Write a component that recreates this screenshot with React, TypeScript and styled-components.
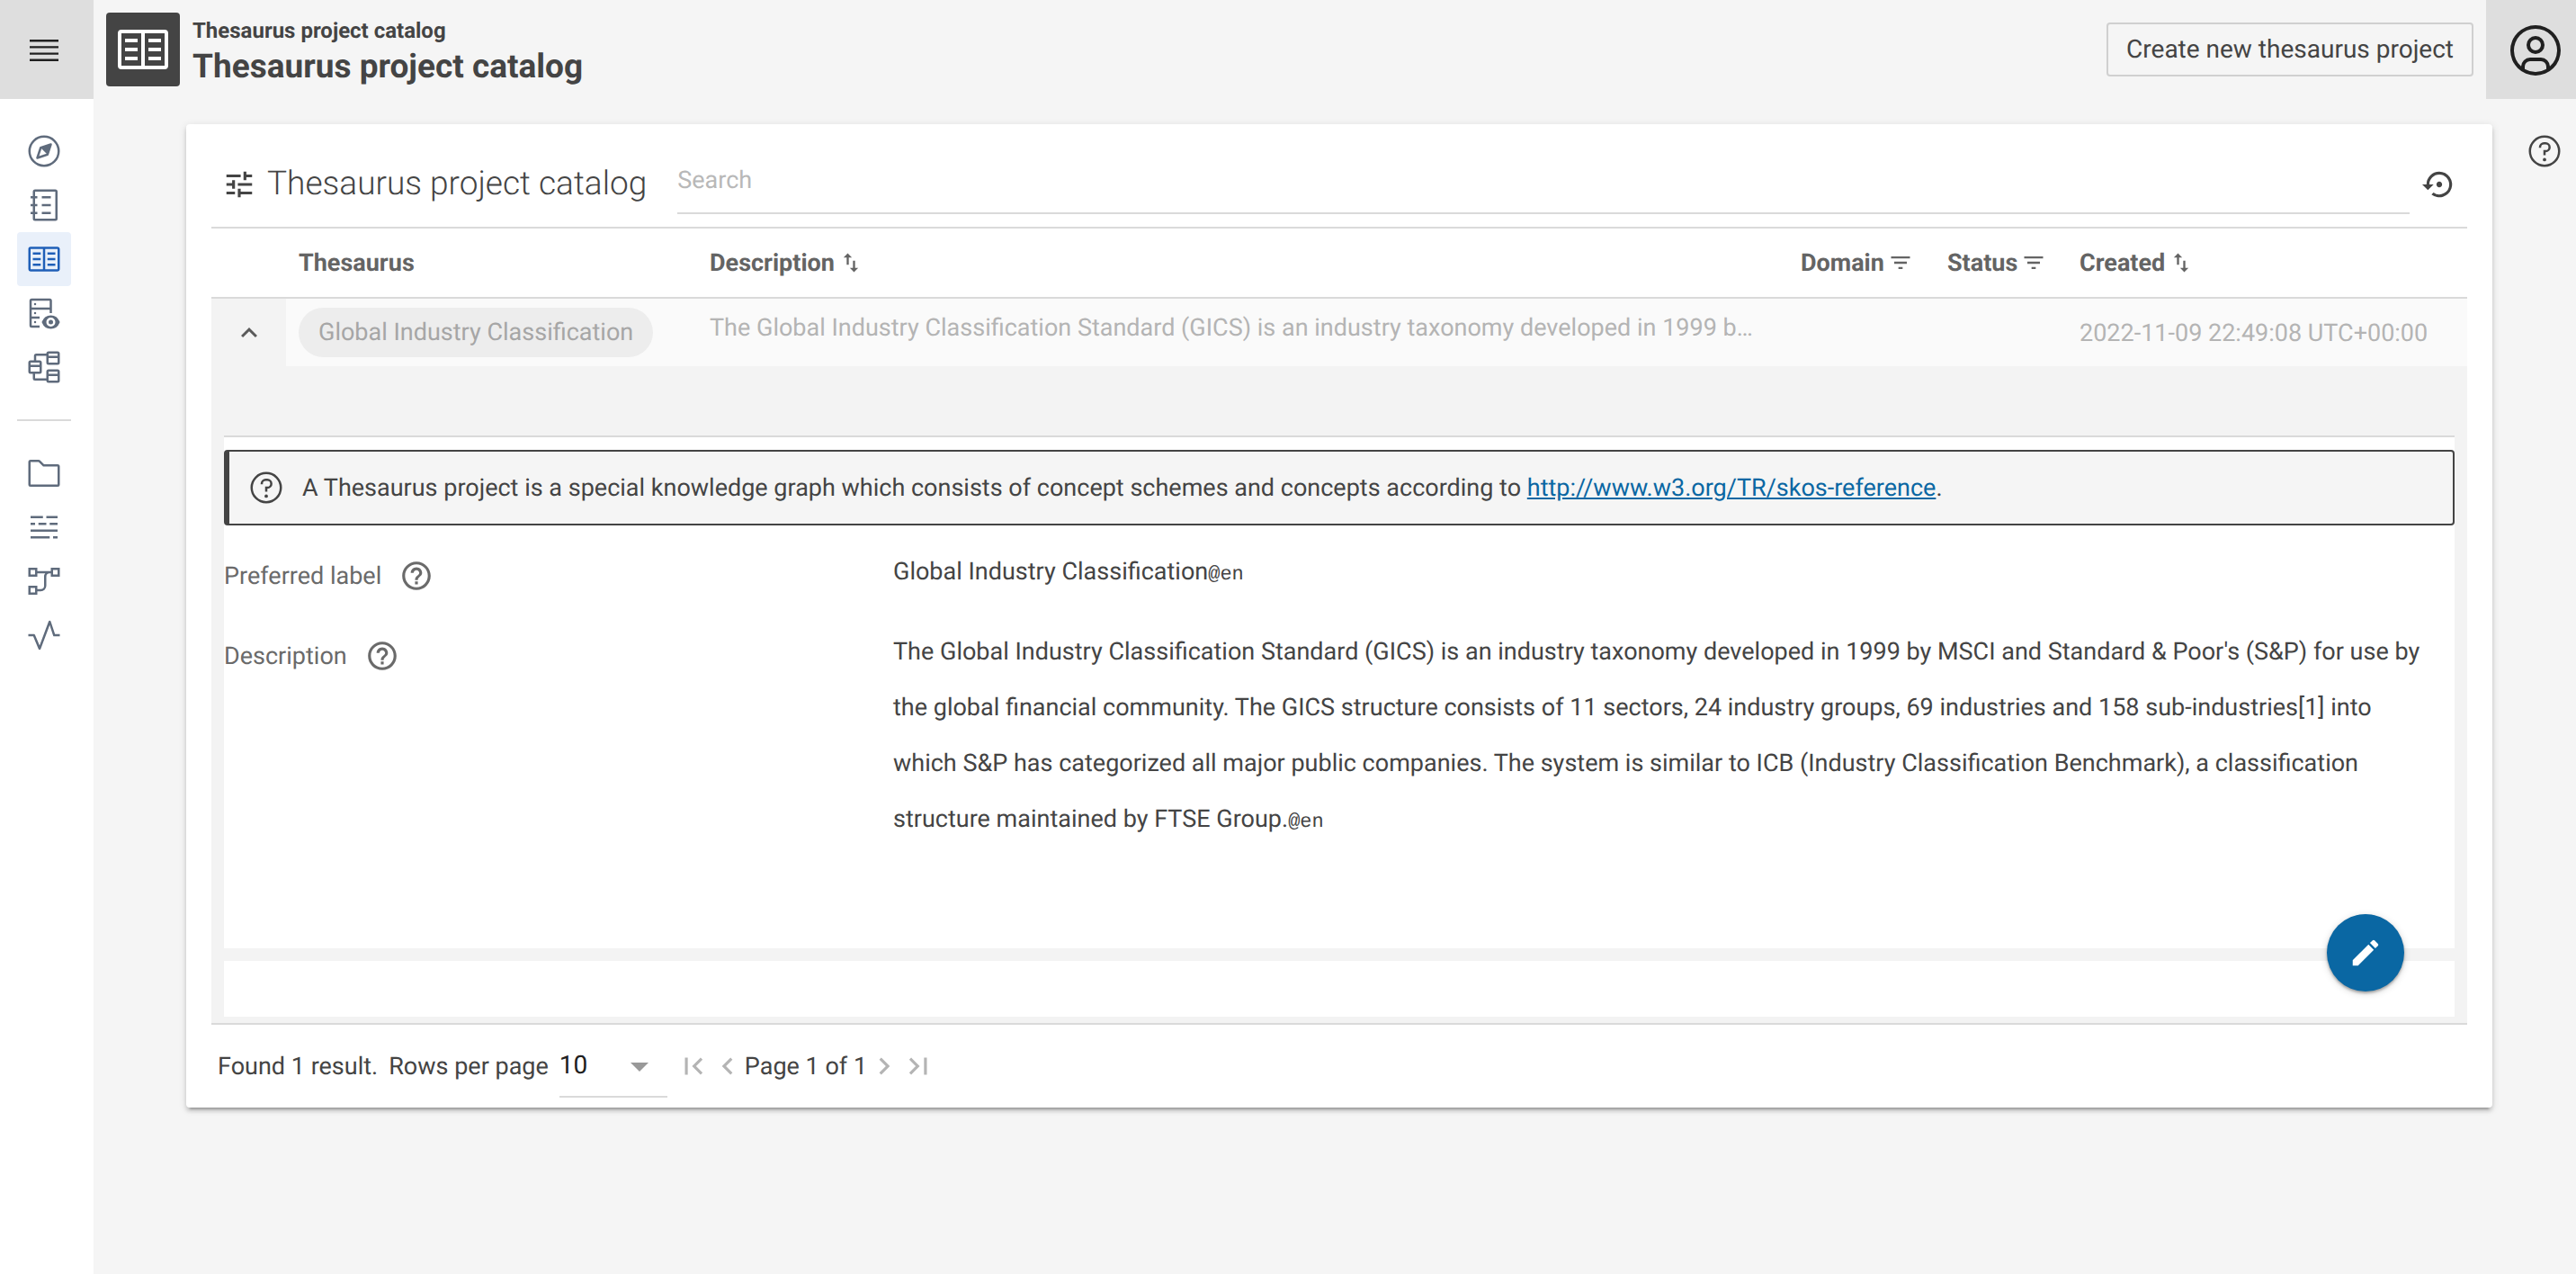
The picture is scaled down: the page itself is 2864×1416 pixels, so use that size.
import React, { useState } from "react";
import styled, { createGlobalStyle } from "styled-components";
import {
  MdExpandLess,
  MdFilterList,
  MdFirstPage,
  MdHelpOutline,
  MdImportExport,
  MdLastPage,
  MdModeEdit,
  MdNavigateBefore,
  MdNavigateNext,
  MdSettingsBackupRestore,
  MdTune,
} from "react-icons/md";

const GlobalStyle = createGlobalStyle`
  *, *::before, *::after { box-sizing: border-box; }
  body {
    margin: 0;
    background: #f5f5f5;
    color: #444;
    font-family: Roboto, "Liberation Sans", sans-serif;
    font-size: 27px;
    line-height: 36px;
    text-rendering: geometricPrecision;
  }
  button, input, select { font: inherit; color: inherit; text-rendering: inherit; }
`;

/* ---------- icons, on a 32 unit grid unless told otherwise ---------- */

const GridIcon = styled.svg.attrs<{ $grid?: number; $size?: number }>((p) => ({
  viewBox: `0 0 ${p.$grid ?? 32} ${p.$grid ?? 32}`,
  "aria-hidden": true,
}))<{ $grid?: number; $size?: number }>`
  display: block;
  flex: none;
  width: ${(p) => p.$size ?? 40}px;
  height: ${(p) => p.$size ?? 40}px;
  fill: currentColor;
`;

const Lines = styled.g`
  fill: none;
  stroke: currentColor;
  stroke-width: 2;
`;

const CompassIcon = () => (
  <GridIcon>
    <path d="M22.707,9.293a.9994.9994,0,0,0-1.0234-.2417l-9,3a1.001,1.001,0,0,0-.6323.6323l-3,9a1,1,0,0,0,1.2651,1.2651l9-3a1.0013,1.0013,0,0,0,.6323-.6324l3-9A1,1,0,0,0,22.707,9.293ZM11.5811,20.419l2.2094-6.6284L18.21,18.21Z" />
    <path d="M16,30A14,14,0,1,1,30,16,14.0158,14.0158,0,0,1,16,30ZM16,4A12,12,0,1,0,28,16,12.0137,12.0137,0,0,0,16,4Z" />
  </GridIcon>
);

const CatalogIcon = () => (
  <GridIcon>
    <path d="M26,2H8A2,2,0,0,0,6,4V8H4v2H6v5H4v2H6v5H4v2H6v4a2,2,0,0,0,2,2H26a2,2,0,0,0,2-2V4A2,2,0,0,0,26,2Zm0,26H8V24h2V22H8V17h2V15H8V10h2V8H8V4H26Z" />
    <path d="M14 8h8v2h-8zM14 15h8v2h-8zM14 22h8v2h-8z" />
  </GridIcon>
);

const BookIcon = ({ size }: { size?: number }) => (
  <GridIcon $size={size}>
    <path d="M28,5H4A2.002,2.002,0,0,0,2,7V25a2.002,2.002,0,0,0,2,2H28a2.002,2.002,0,0,0,2-2V7A2.002,2.002,0,0,0,28,5ZM4,7H15V25H4ZM17,25V7H28V25Z" />
    <path d="M19 10h7v2h-7zM19 15h7v2h-7zM19 20h7v2h-7zM6 10h7v2H6zM6 15h7v2H6zM6 20h7v2H6z" />
  </GridIcon>
);

const DataViewIcon = () => (
  <GridIcon>
    <Lines>
      <path d="M12 28H5a1 1 0 0 1-1-1V5a1 1 0 0 1 1-1h16a1 1 0 0 1 1 1v11M4 12h18M4 20h8" />
    </Lines>
    <circle cx="8" cy="8" r="1" />
    <circle cx="8" cy="16" r="1" />
    <circle cx="8" cy="24" r="1" />
    <circle cx="22" cy="24" r="2" />
    <path d="M29.7769,23.4785A8.64,8.64,0,0,0,22,18a8.64,8.64,0,0,0-7.7769,5.4785L14,24l.2231.5215A8.64,8.64,0,0,0,22,30a8.64,8.64,0,0,0,7.7769-5.4785L30,24ZM22,28a4,4,0,1,1,4-4A4.0045,4.0045,0,0,1,22,28Z" />
  </GridIcon>
);

const StructureIcon = () => (
  <GridIcon>
    <Lines>
      <rect x="19" y="3" width="10" height="10" rx="1" />
      <rect x="19" y="19" width="10" height="10" rx="1" />
      <rect x="3" y="11" width="10" height="10" rx="1" />
      <path d="M19 7h10M19 23h10M3 15h10M8 11V6a1 1 0 0 1 1-1h10M7 21v5a1 1 0 0 0 1 1h11" />
    </Lines>
  </GridIcon>
);

const FolderIcon = () => (
  <GridIcon>
    <path d="M11.17,6l3.42,3.41.58.59H28V26H4V6h7.17m0-2H4A2,2,0,0,0,2,6V26a2,2,0,0,0,2,2H28a2,2,0,0,0,2-2V10a2,2,0,0,0-2-2H16L12.59,4.59A2,2,0,0,0,11.17,4Z" />
  </GridIcon>
);

const TextLinesIcon = () => (
  <GridIcon>
    <path d="M4 6h11v2H4zM18 6h10v2H18zM4 12h4v2H4zM11 12h7v2h-7zM21 12h7v2h-7zM4 18h24v2H4zM4 24h17v2H4zM24 24h4v2h-4z" />
  </GridIcon>
);

const FlowIcon = () => (
  <GridIcon>
    <Lines>
      <path d="M3 5h6v6H3zM23 5h6v6h-6zM3 21h6v6H3zM10 8h12M10 24h3a4 4 0 0 0 4-4v-8a4 4 0 0 1 4-4" />
    </Lines>
  </GridIcon>
);

const ActivityIcon = () => (
  <GridIcon>
    <path d="M12,29a1,1,0,0,1-.92-.62L6.33,17H2V15H7a1,1,0,0,1,.92.62L12,25.28,20.06,3.65A1,1,0,0,1,21,3a1,1,0,0,1,.93.68L25.72,15H30v2H25a1,1,0,0,1-.95-.68L21,7,12.94,28.35A1,1,0,0,1,12,29Z" />
  </GridIcon>
);

const HelpIcon = () => (
  <GridIcon>
    <path d="M16,2A14,14,0,1,0,30,16,14,14,0,0,0,16,2Zm0,26A12,12,0,1,1,28,16,12,12,0,0,1,16,28Z" />
    <circle cx="16" cy="23.5" r="1.5" />
    <path d="M17,8H15.5A4.49,4.49,0,0,0,11,12.49V13h2v-.5A2.5,2.5,0,0,1,15.5,10H17a2.5,2.5,0,0,1,0,5H15v4.5h2V17a4.5,4.5,0,0,0,0-9Z" />
  </GridIcon>
);

const MenuIcon = () => (
  <GridIcon $grid={20}>
    <path d="M2 14.8h16V16H2zM2 11.2h16v1.2H2zM2 7.6h16v1.2H2zM2 4h16v1.2H2z" />
  </GridIcon>
);

const AvatarIcon = () => (
  <GridIcon $size={64}>
    <path d="M16 8a5 5 0 105 5A5 5 0 0016 8zm0 8a3 3 0 113-3A3.0034 3.0034 0 0116 16z" />
    <path d="M16 2A14 14 0 1030 16 14.0158 14.0158 0 0016 2ZM10 26.3765V25a3.0033 3.0033 0 013-3h6a3.0033 3.0033 0 013 3v1.3765a11.8989 11.8989 0 01-12 0zm13.9925-1.4507A5.0016 5.0016 0 0019 20H13a5.0016 5.0016 0 00-4.9925 4.9258 12 12 0 1115.985 0z" />
  </GridIcon>
);

/* ---------- shell ---------- */

const Shell = styled.div`
  display: flex;
  flex-direction: column;
  min-height: 100vh;
`;

const Header = styled.header`
  display: flex;
  align-items: center;
  height: 110px;
`;

const HeaderButton = styled.button<{ $width: number }>`
  display: flex;
  align-items: center;
  justify-content: center;
  align-self: stretch;
  width: ${(p) => p.$width}px;
  padding: 0;
  border: 0;
  background: #dedede;
  color: #202020;
`;

const MenuButton = styled(HeaderButton)`
  padding-right: 6px;
  padding-top: 2px;
`;

const UserButton = styled(HeaderButton)`
  padding-left: 10px;
  padding-top: 2px;
`;

const Badge = styled.div`
  display: flex;
  align-items: center;
  justify-content: center;
  width: 82px;
  height: 82px;
  margin: 0 14px;
  border-radius: 4px;
  background: #444;
  color: #fff;
`;

const Titles = styled.div`
  flex: 1;
  padding-top: 4px;
  font-weight: 700;
`;

const Crumb = styled.p`
  margin: 0;
  font-size: 24px;
  line-height: 36px;
`;

const PageTitle = styled.h1`
  margin: 0;
  font-size: 37px;
  line-height: 46px;
  font-weight: 700;
`;

const OutlineButton = styled.button`
  height: 60px;
  margin-right: 14px;
  padding: 0 20px;
  border: 2px solid #d0d0d0;
  border-radius: 4px;
  background: #f5f5f5;
  font-size: 28px;
`;

const Body = styled.div`
  display: flex;
  flex: 1;
`;

const Rail = styled.nav`
  width: 104px;
  padding: 28px 25px 28px 19px;
  background: #fff;
`;

const RailLink = styled.a<{ $active?: boolean }>`
  display: flex;
  align-items: center;
  justify-content: center;
  height: 60px;
  border-radius: 4px;
  background: ${(p) => (p.$active ? "#e9f0fa" : "transparent")};
  color: ${(p) => (p.$active ? "#1f5fb8" : "#5f6b7c")};
`;

const RailDivider = styled.hr`
  height: 2px;
  margin: 28px 0;
  border: 0;
  background: #dadada;
`;

const Main = styled.main`
  flex: 1;
  min-width: 0;
  padding: 28px 23px 28px 103px;
`;

const Aside = styled.aside`
  width: 70px;
  padding-top: 38px;
`;

const PlainButton = styled.button`
  display: flex;
  flex: none;
  align-items: center;
  justify-content: center;
  padding: 0;
  border: 0;
  background: none;
`;

const AsideButton = styled(PlainButton)`
  width: 100%;
`;

/* ---------- catalog card ---------- */

const Card = styled.section`
  padding: 0 28px;
  border-radius: 4px;
  background: #fff;
  box-shadow: 0 4px 4px rgba(0, 0, 0, 0.14), 0 6px 2px -4px rgba(0, 0, 0, 0.2),
    0 2px 10px rgba(0, 0, 0, 0.12);
`;

const Toolbar = styled.div`
  display: flex;
  align-items: center;
  height: 114px;
  padding: 20px 12px 0;
`;

const ToolbarTitle = styled.h2`
  margin: 0 34px 0 12px;
  font-size: 37px;
  line-height: 46px;
  font-weight: 300;
`;

const SearchInput = styled.input`
  flex: 1;
  align-self: flex-start;
  min-width: 0;
  height: 80px;
  padding: 6px 0 0;
  border: 0;
  border-bottom: 2px solid #dadada;
  background: none;
  outline: none;
  &::placeholder {
    color: #b8b8b8;
    opacity: 1;
  }
`;

const ResetButton = styled(PlainButton)`
  margin-left: 14px;
  width: 38px;
`;

const Table = styled.table`
  width: 100%;
  table-layout: fixed;
  border-collapse: separate;
  border-spacing: 0;
  border-top: 2px solid #dadada;
  border-bottom: 2px solid #dadada;
`;

const Col = styled.col<{ $width?: number }>`
  width: ${(p) => (p.$width ? `${p.$width}px` : "auto")};
`;

const HeadCell = styled.th`
  height: 78px;
  padding: 0 0 0 14px;
  border-bottom: 2px solid #dadada;
  color: #646464;
  text-align: left;
  font-weight: 700;
`;

const HeadLabel = styled.div`
  display: flex;
  align-items: center;
  gap: 4px;
`;

const Cell = styled.td<{ $top?: boolean }>`
  height: 75px;
  padding: ${(p) => (p.$top ? "14px 14px 0" : "0 14px")};
  overflow: hidden;
  background: #fafafa;
  color: #b4b4b4;
  text-overflow: ellipsis;
  vertical-align: ${(p) => (p.$top ? "top" : "middle")};
  white-space: nowrap;
`;

const ToggleCell = styled(Cell)`
  padding: 0;
  background: #f3f3f3;
  color: #5a5a5a;
`;

const ToggleButton = styled(PlainButton)`
  width: 100%;
`;

const Chip = styled.span`
  display: inline-block;
  height: 55px;
  padding: 0 22px;
  border-radius: 28px;
  background: #ededed;
  color: #a6a6a6;
  line-height: 55px;
  vertical-align: middle;
`;

const DetailCell = styled.td`
  padding: 77px 14px 7px;
  background: #f3f3f3;
`;

const Details = styled.div`
  position: relative;
  display: flex;
  flex-direction: column;
  gap: 14px;
`;

const DetailPanel = styled.div`
  padding: 14px 0 113px;
  border-top: 2px solid #dadada;
  background: #fff;
`;

const DetailFooter = styled.div`
  height: 62px;
  background: #fff;
`;

const Notice = styled.div`
  display: flex;
  align-items: center;
  gap: 20px;
  padding: 20px 21px;
  border: 2px solid #444;
  border-left-width: 6px;
  border-radius: 4px;
  background: #f5f5f5;
`;

const NoticeText = styled.p`
  margin: 0;
`;

const TextLink = styled.a`
  color: #0a67a3;
  text-decoration: underline;
`;

const Properties = styled.dl`
  display: flex;
  flex-direction: column;
  gap: 27px;
  margin: 20px 0 0;
`;

const Property = styled.div`
  display: grid;
  grid-template-columns: 3fr 7fr;
  align-items: start;
`;

const PropertyName = styled.dt`
  display: flex;
  align-items: center;
  gap: 20px;
  height: 72px;
  margin-bottom: -10px;
  color: #6a6a6a;
`;

const PropertyValue = styled.dd`
  margin: 0;
  padding-right: 20px;
  line-height: 62px;
`;

const LangTag = styled.code`
  font-family: "Liberation Mono", monospace;
  font-size: 22px;
  line-height: 36px;
`;

const EditButton = styled.button`
  position: absolute;
  right: 56px;
  bottom: 28px;
  display: flex;
  align-items: center;
  justify-content: center;
  width: 86px;
  height: 86px;
  padding: 0;
  border: 0;
  border-radius: 50%;
  background: #0a67a3;
  color: #fff;
  box-shadow: 0 2px 3px rgba(0, 0, 0, 0.3), 0 2px 8px rgba(0, 0, 0, 0.16);
`;

/* ---------- pagination ---------- */

const Pagination = styled.div`
  display: flex;
  align-items: center;
  height: 92px;
  padding-left: 7px;
  white-space: nowrap;
`;

const PageSizeLabel = styled.label`
  margin: 0 12px;
`;

const SelectBox = styled.div`
  position: relative;
  width: 120px;
  margin-right: 10px;
`;

const PageSize = styled.select`
  display: block;
  width: 100%;
  height: 70px;
  padding: 0;
  border: 0;
  border-bottom: 2px solid #dadada;
  border-radius: 0;
  background: none;
  color: #202020;
  font-size: 28px;
  appearance: none;
`;

const SelectArrow = styled.svg`
  position: absolute;
  top: 31px;
  right: 21px;
  width: 20px;
  height: 10px;
  fill: #999;
  pointer-events: none;
`;

const PageButton = styled(PlainButton)`
  width: 38px;
  color: #b4b4b4;
`;

const mainLinks = [
  { label: "Explore", Icon: CompassIcon },
  { label: "Vocabulary catalog", Icon: CatalogIcon },
  { label: "Thesaurus catalog", Icon: BookIcon, active: true },
  { label: "Data views", Icon: DataViewIcon },
  { label: "Structures", Icon: StructureIcon },
];

const buildLinks = [
  { label: "Projects", Icon: FolderIcon },
  { label: "Datasets", Icon: TextLinesIcon },
  { label: "Workflows", Icon: FlowIcon },
  { label: "Activities", Icon: ActivityIcon },
];

const gicsText =
  "The Global Industry Classification Standard (GICS) is an industry taxonomy developed in 1999 by MSCI and Standard & Poor's (S&P) for use by the global financial community. The GICS structure consists of 11 sectors, 24 industry groups, 69 industries and 158 sub-industries[1] into which S&P has categorized all major public companies. The system is similar to ICB (Industry Classification Benchmark), a classification structure maintained by FTSE Group.";

const PREVIEW_LENGTH = 94;

const preview = (text: string) =>
  text.length > PREVIEW_LENGTH ? `${text.slice(0, PREVIEW_LENGTH)}…` : text;

const properties = [
  { name: "Preferred label", value: "Global Industry Classification" },
  { name: "Description", value: gicsText },
];

export default function App() {
  const [query, setQuery] = useState("");
  const [pageSize, setPageSize] = useState("10");

  return (
    <>
      <GlobalStyle />
      <Shell>
        <Header>
          <MenuButton $width={104} aria-label="Toggle navigation">
            <MenuIcon />
          </MenuButton>
          <Badge>
            <BookIcon size={64} />
          </Badge>
          <Titles>
            <Crumb>Thesaurus project catalog</Crumb>
            <PageTitle>Thesaurus project catalog</PageTitle>
          </Titles>
          <OutlineButton>Create new thesaurus project</OutlineButton>
          <UserButton $width={100} aria-label="User menu">
            <AvatarIcon />
          </UserButton>
        </Header>

        <Body>
          <Rail>
            {mainLinks.map(({ label, Icon, active }) => (
              <RailLink key={label} href="#" aria-label={label} $active={active}>
                <Icon />
              </RailLink>
            ))}
            <RailDivider />
            {buildLinks.map(({ label, Icon }) => (
              <RailLink key={label} href="#" aria-label={label}>
                <Icon />
              </RailLink>
            ))}
          </Rail>

          <Main>
            <Card>
              <Toolbar>
                <MdTune size={38} />
                <ToolbarTitle>Thesaurus project catalog</ToolbarTitle>
                <SearchInput
                  type="text"
                  aria-label="Search"
                  placeholder="Search"
                  value={query}
                  onChange={(e) => setQuery(e.target.value)}
                />
                <ResetButton aria-label="Reset filters">
                  <MdSettingsBackupRestore size={38} />
                </ResetButton>
              </Toolbar>

              <Table>
                <colgroup>
                  <Col $width={83} />
                  <Col $width={457} />
                  <Col />
                  <Col $width={163} />
                  <Col $width={147} />
                  <Col $width={445} />
                </colgroup>
                <thead>
                  <tr>
                    <HeadCell aria-label="Expand" />
                    <HeadCell>Thesaurus</HeadCell>
                    <HeadCell>
                      <HeadLabel>
                        Description
                        <MdImportExport size={28} />
                      </HeadLabel>
                    </HeadCell>
                    <HeadCell>
                      <HeadLabel>
                        Domain
                        <MdFilterList size={28} />
                      </HeadLabel>
                    </HeadCell>
                    <HeadCell>
                      <HeadLabel>
                        Status
                        <MdFilterList size={28} />
                      </HeadLabel>
                    </HeadCell>
                    <HeadCell>
                      <HeadLabel>
                        Created
                        <MdImportExport size={28} />
                      </HeadLabel>
                    </HeadCell>
                  </tr>
                </thead>
                <tbody>
                  <tr>
                    <ToggleCell>
                      <ToggleButton aria-label="Collapse row" aria-expanded="true">
                        <MdExpandLess size={36} />
                      </ToggleButton>
                    </ToggleCell>
                    <Cell>
                      <Chip>Global Industry Classification</Chip>
                    </Cell>
                    <Cell $top>{preview(gicsText)}</Cell>
                    <Cell />
                    <Cell />
                    <Cell>2022-11-09 22:49:08 UTC+00:00</Cell>
                  </tr>
                  <tr>
                    <DetailCell colSpan={6}>
                      <Details>
                        <DetailPanel>
                          <Notice>
                            <HelpIcon />
                            <NoticeText>
                              A Thesaurus project is a special knowledge graph which consists of concept
                              schemes and concepts according to{" "}
                              <TextLink href="http://www.w3.org/TR/skos-reference">
                                http://www.w3.org/TR/skos-reference
                              </TextLink>
                              .
                            </NoticeText>
                          </Notice>
                          <Properties>
                            {properties.map(({ name, value }) => (
                              <Property key={name}>
                                <PropertyName>
                                  {name}
                                  <MdHelpOutline size={38} />
                                </PropertyName>
                                <PropertyValue>
                                  {value}
                                  <LangTag>@en</LangTag>
                                </PropertyValue>
                              </Property>
                            ))}
                          </Properties>
                        </DetailPanel>
                        <DetailFooter />
                        <EditButton aria-label="Edit">
                          <MdModeEdit size={38} />
                        </EditButton>
                      </Details>
                    </DetailCell>
                  </tr>
                </tbody>
              </Table>

              <Pagination>
                <span>Found 1 result.</span>
                <PageSizeLabel htmlFor="page-size">Rows per page</PageSizeLabel>
                <SelectBox>
                  <PageSize id="page-size" value={pageSize} onChange={(e) => setPageSize(e.target.value)}>
                    <option>10</option>
                    <option>25</option>
                    <option>50</option>
                    <option>100</option>
                  </PageSize>
                  <SelectArrow viewBox="0 0 20 10" aria-hidden>
                    <path d="M0 0h20L10 10z" />
                  </SelectArrow>
                </SelectBox>
                <PageButton aria-label="First page">
                  <MdFirstPage size={38} />
                </PageButton>
                <PageButton aria-label="Previous page">
                  <MdNavigateBefore size={38} />
                </PageButton>
                <span>Page 1 of 1</span>
                <PageButton aria-label="Next page">
                  <MdNavigateNext size={38} />
                </PageButton>
                <PageButton aria-label="Last page">
                  <MdLastPage size={38} />
                </PageButton>
              </Pagination>
            </Card>
          </Main>

          <Aside>
            <AsideButton aria-label="Help">
              <HelpIcon />
            </AsideButton>
          </Aside>
        </Body>
      </Shell>
    </>
  );
}
